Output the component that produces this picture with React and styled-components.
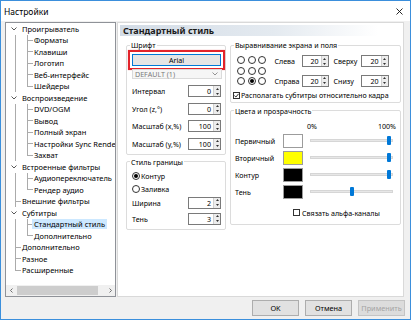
import React from 'react';
import styled, { createGlobalStyle } from 'styled-components';

const GlobalStyle = createGlobalStyle`
  html, body {
    margin: 0;
    padding: 0;
    background: #fff;
  }
  body {
    font-family: 'Noto Sans', 'Open Sans', sans-serif;
    font-size: 7.8px;
    color: #000;
  }
  * {
    box-sizing: border-box;
  }
`;

const line = '#ababab';

const Window = styled.div`
  width: 411px;
  height: 320px;
  border: 1px solid #3b8fdc;
  background: #f0f0f0;
  display: flex;
  flex-direction: column;
  overflow: hidden;
`;

const TitleBar = styled.div`
  height: 20px;
  flex: none;
  background: #fff;
  display: flex;
  align-items: center;
  justify-content: space-between;
  padding: 0 7px 0 3px;
`;

const Title = styled.span`
  font-size: 8.5px;
`;

const Body = styled.div`
  flex: 1;
  display: flex;
  gap: 1px;
  padding: 1px 6px 0 4px;
  min-height: 0;
`;

/* ---------- tree ---------- */

const TreeBox = styled.div`
  width: 111px;
  flex: none;
  border: 1px solid #8f9298;
  background: #fff;
  display: flex;
  flex-direction: column;
  font-size: 7.5px;
`;

const TreeList = styled.div`
  flex: 1;
  overflow: hidden;
  padding-left: 3px;
`;

const TreeRow = styled.div`
  display: flex;
  height: 11.5px;
  line-height: 11.5px;
  white-space: nowrap;
`;

const guideBg = (v, h) => {
  const g = `linear-gradient(${line}, ${line})`;
  const parts = [];
  if (v === 'full') parts.push(`${g} 6px 0 / 1px 100% no-repeat`);
  if (v === 'top') parts.push(`${g} 6px 0 / 1px 50% no-repeat`);
  if (h) parts.push(`${g} 6px 50% / 6px 1px no-repeat`);
  return parts.length ? parts.join(', ') : 'none';
};

const Guide = styled.span`
  width: 12px;
  flex: none;
  display: flex;
  align-items: center;
  padding-left: 2px;
  background: ${p => guideBg(p.$v, p.$h)};
`;

const TreeLabel = styled.span`
  padding: 0 2px;
  margin-left: -1px;
  height: 10px;
  line-height: 10px;
  align-self: center;
  background: ${p => (p.$selected ? '#cce8ff' : 'transparent')};
`;

const HScroll = styled.div`
  height: 11px;
  flex: none;
  display: flex;
  align-items: center;
  background: #f0f0f0;
`;

const ScrollArrow = styled.span`
  width: 10px;
  height: 11px;
  display: flex;
  align-items: center;
  justify-content: center;
`;

const ScrollThumb = styled.span`
  width: 81px;
  height: 9px;
  margin-left: 1px;
  background: #cdcdcd;
`;

const Spacer = styled.span`
  flex: 1;
`;

/* ---------- page ---------- */

const Page = styled.div`
  width: 287px;
  flex: none;
  border: 1px solid #d9d9d9;
  background: #fff;
  display: flex;
  flex-direction: column;
  font-size: 7.1px;
`;

const PageHeader = styled.div`
  margin: 2px 2px 0 2px;
  height: 11px;
  padding-left: 3px;
  line-height: 11px;
  font-size: 9px;
  font-weight: 700;
  color: #1b1b1b;
  background: linear-gradient(90deg, #d3dce6 0%, #e4eaf0 55%, #fff 92%);
`;

const Columns = styled.div`
  display: flex;
  gap: 4px;
  padding: 4px 2px 0 8px;
`;

const Column = styled.div`
  width: ${p => p.$w}px;
  flex: none;
  display: flex;
  flex-direction: column;
  gap: ${p => p.$gap || 0}px;
`;

const Group = styled.fieldset`
  margin: 0;
  min-width: 0;
  border: 1px solid #dcdcdc;
  border-radius: 2px;
  padding: 0 4px ${p => p.$pb || 4}px 5px;
`;

const Legend = styled.legend`
  padding: 0 1px;
  margin-left: -2px;
  line-height: 10px;
`;

const Highlight = styled.div`
  margin: 0 -4px;
  border: 2px solid #e2232a;
  padding: 2px;
  box-shadow: 0 0 1px rgba(226, 35, 42, 0.5);
`;

const FontButton = styled.div`
  height: 12px;
  border: 1px solid #0078d7;
  background: #e5e5e5;
  text-align: center;
  line-height: 10px;
`;

const Combo = styled.div`
  height: 10px;
  margin: -1px -1px 0 0;
  border: 1px solid #dadada;
  background: #f6f6f6;
  color: #7a7a7a;
  display: flex;
  align-items: center;
  justify-content: space-between;
  padding: 0 3px 0 2px;
  line-height: 8px;
`;

const FieldRow = styled.div`
  display: flex;
  align-items: center;
  justify-content: space-between;
  height: 12px;
  margin-top: ${p => p.$mt || 0}px;
`;

const SpinWrap = styled.div`
  width: ${p => p.$w || 33}px;
  height: 12px;
  flex: none;
  display: flex;
  border: 1px solid #7a7a7a;
  background: #fff;
`;

const SpinValue = styled.span`
  flex: 1;
  text-align: right;
  padding-right: 2px;
  line-height: 10px;
`;

const SpinArrows = styled.span`
  width: 7px;
  display: flex;
  flex-direction: column;
  background: #ececec;
  border-left: 1px solid #d0d0d0;
`;

const SpinArrow = styled.span`
  flex: 1;
  display: flex;
  align-items: center;
  justify-content: center;
`;

const OptionRow = styled.label`
  display: flex;
  align-items: center;
  gap: ${p => p.$gap ?? 2}px;
  height: ${p => p.$h || 12}px;
  margin-top: ${p => p.$mt || 0}px;
  margin-left: ${p => p.$ml || 0}px;
  white-space: nowrap;
`;

const RadioDot = styled.span`
  width: 8px;
  height: 8px;
  flex: none;
  border-radius: 50%;
  border: 1px solid #333;
  background: #fff;
  display: flex;
  align-items: center;
  justify-content: center;

  &::after {
    content: '';
    width: 4px;
    height: 4px;
    border-radius: 50%;
    background: ${p => (p.$checked ? '#000' : 'transparent')};
  }
`;

const CheckBox = styled.span`
  width: 7px;
  height: 7px;
  flex: none;
  border: 1px solid #333;
  background: #fff;
  display: flex;
  align-items: center;
  justify-content: center;
`;

const AlignArea = styled.div`
  display: flex;
  align-items: flex-start;
  margin-top: 5px;
`;

const RadioGrid = styled.div`
  display: grid;
  grid-template-columns: repeat(3, 10.5px);
  grid-auto-rows: 10.5px;
  place-items: center;
`;

const MarginGrid = styled.div`
  display: grid;
  grid-template-columns: 27px 27px 32px 28px;
  grid-template-rows: 12px 12px;
  row-gap: 7.5px;
  align-items: center;
  margin-left: 7px;
`;

const MarginLabel = styled.span`
  padding-left: ${p => p.$pl || 0}px;
`;

const ColorGrid = styled.div`
  display: grid;
  grid-template-columns: 47px 20px 90px;
  row-gap: 3px;
  align-items: center;
  margin-top: 5px;
`;

const PercentRow = styled.div`
  grid-column: 3;
  display: flex;
  justify-content: space-between;
  margin: 0 -3px 0 4px;
  height: 10px;
  line-height: 10px;
`;

const ColorLabel = styled.span`
  grid-column: 1;
  margin-left: -1px;
`;

const Swatch = styled.span`
  height: 14px;
  border: 1px solid #9c9c9c;
  background: ${p => p.$color};
`;

const SliderTrack = styled.div`
  position: relative;
  height: 3px;
  margin-left: 7px;
  border: 1px solid #d6d6d6;
  background: #e7e7e7;
`;

const SliderThumb = styled.span`
  position: absolute;
  top: 50%;
  width: 4px;
  height: 9px;
  margin: -4.5px 0 0 -2px;
  background: #0078d7;
  border-radius: 1px;
`;

/* ---------- footer ---------- */

const Footer = styled.div`
  height: 22px;
  flex: none;
  display: flex;
  justify-content: flex-end;
  align-items: flex-start;
  gap: 6px;
  padding: 3px 5px 0 0;
`;

const Button = styled.div`
  width: 47px;
  height: 16px;
  font-size: 7.3px;
  border: 1px solid ${p => (p.$disabled ? '#c4c4c4' : '#adadad')};
  background: ${p => (p.$disabled ? '#dcdcdc' : '#e1e1e1')};
  color: ${p => (p.$disabled ? '#a3a3a3' : '#000')};
  text-align: center;
  line-height: 14px;
`;

/* ---------- small drawings ---------- */

const CloseIcon = () => (
  <svg width="7" height="7" viewBox="0 0 7 7">
    <path d="M0.5 0.5 L6.5 6.5 M6.5 0.5 L0.5 6.5" stroke="#111" strokeWidth="0.9" />
  </svg>
);

const ChevronDown = ({ color = '#555' }) => (
  <svg width="6" height="4" viewBox="0 0 6 4">
    <path d="M0.5 0.5 L3 3 L5.5 0.5" fill="none" stroke={color} strokeWidth="0.9" />
  </svg>
);

const ChevronSide = ({ dir }) => (
  <svg width="3" height="5" viewBox="0 0 3 5">
    <path
      d={dir === 'left' ? 'M2.5 0.5 L0.5 2.5 L2.5 4.5' : 'M0.5 0.5 L2.5 2.5 L0.5 4.5'}
      fill="none"
      stroke="#606060"
      strokeWidth="0.9"
    />
  </svg>
);

const Tri = ({ up }) => (
  <svg width="3" height="2" viewBox="0 0 3 2">
    <path d={up ? 'M0 2 L1.5 0 L3 2 Z' : 'M0 0 L1.5 2 L3 0 Z'} fill="#333" />
  </svg>
);

const Tick = () => (
  <svg width="5" height="5" viewBox="0 0 5 5">
    <path d="M0.4 2.6 L1.9 4 L4.6 0.8" fill="none" stroke="#111" strokeWidth="0.9" />
  </svg>
);

/* ---------- parts ---------- */

const tree = [
  { label: 'Проигрыватель', level: 0, open: true },
  { label: 'Форматы', level: 1 },
  { label: 'Клавиши', level: 1 },
  { label: 'Логотип', level: 1 },
  { label: 'Веб-интерфейс', level: 1 },
  { label: 'Шейдеры', level: 1, last: true },
  { label: 'Воспроизведение', level: 0, open: true },
  { label: 'DVD/OGM', level: 1 },
  { label: 'Вывод', level: 1 },
  { label: 'Полный экран', level: 1 },
  { label: 'Настройки Sync Render', level: 1 },
  { label: 'Захват', level: 1, last: true },
  { label: 'Встроенные фильтры', level: 0, open: true },
  { label: 'Аудиопереключатель', level: 1 },
  { label: 'Рендер аудио', level: 1, last: true },
  { label: 'Внешние фильтры', level: 0 },
  { label: 'Субтитры', level: 0, open: true },
  { label: 'Стандартный стиль', level: 1, selected: true },
  { label: 'Дополнительно', level: 1, last: true },
  { label: 'Дополнительно', level: 0 },
  { label: 'Разное', level: 0 },
  { label: 'Расширенные', level: 0, last: true },
];

function TreeItem({ item }) {
  if (item.level === 0) {
    return (
      <TreeRow>
        {item.open ? (
          <Guide>
            <ChevronDown color="#444" />
          </Guide>
        ) : (
          <Guide $v={item.last ? 'top' : 'full'} $h />
        )}
        <TreeLabel $selected={item.selected}>{item.label}</TreeLabel>
      </TreeRow>
    );
  }
  return (
    <TreeRow>
      <Guide $v="full" />
      <Guide $v={item.last ? 'top' : 'full'} $h />
      <TreeLabel $selected={item.selected}>{item.label}</TreeLabel>
    </TreeRow>
  );
}

function Spin({ value, w }) {
  return (
    <SpinWrap $w={w}>
      <SpinValue>{value}</SpinValue>
      <SpinArrows>
        <SpinArrow>
          <Tri up />
        </SpinArrow>
        <SpinArrow>
          <Tri />
        </SpinArrow>
      </SpinArrows>
    </SpinWrap>
  );
}

function ColorRow({ label, color, alpha }) {
  return (
    <>
      <ColorLabel>{label}</ColorLabel>
      <Swatch $color={color} />
      <SliderTrack>
        <SliderThumb style={{ left: `calc(3px + ${alpha} * (100% - 6px))` }} />
      </SliderTrack>
    </>
  );
}

export default function App() {
  const positions = [false, false, false, false, false, false, false, true, false];

  return (
    <>
      <GlobalStyle />
      <Window>
        <TitleBar>
          <Title>Настройки</Title>
          <CloseIcon />
        </TitleBar>

        <Body>
          <TreeBox>
            <TreeList>
              {tree.map((item, i) => (
                <TreeItem key={i} item={item} />
              ))}
            </TreeList>
            <HScroll>
              <ScrollArrow>
                <ChevronSide dir="left" />
              </ScrollArrow>
              <ScrollThumb />
              <Spacer />
              <ScrollArrow>
                <ChevronSide dir="right" />
              </ScrollArrow>
            </HScroll>
          </TreeBox>

          <Page>
            <PageHeader>Стандартный стиль</PageHeader>
            <Columns>
              <Column $w={100} $gap={2}>
                <Group>
                  <Legend>Шрифт</Legend>
                  <Highlight>
                    <FontButton>Arial</FontButton>
                  </Highlight>
                  <Combo>
                    <span>DEFAULT (1)</span>
                    <ChevronDown color="#888" />
                  </Combo>
                  <FieldRow $mt={6}>
                    <span>Интервал</span>
                    <Spin value="0" />
                  </FieldRow>
                  <FieldRow $mt={5.6}>
                    <span>Угол (z,°)</span>
                    <Spin value="0" />
                  </FieldRow>
                  <FieldRow $mt={5.6}>
                    <span>Масштаб (x,%)</span>
                    <Spin value="100" />
                  </FieldRow>
                  <FieldRow $mt={5.6}>
                    <span>Масштаб (y,%)</span>
                    <Spin value="100" />
                  </FieldRow>
                </Group>

                <Group>
                  <Legend>Стиль границы</Legend>
                  <OptionRow $mt={3} $gap={1}>
                    <RadioDot $checked />
                    Контур
                  </OptionRow>
                  <OptionRow $mt={1} $gap={1}>
                    <RadioDot />
                    Заливка
                  </OptionRow>
                  <FieldRow $mt={2}>
                    <span>Ширина</span>
                    <Spin value="2" />
                  </FieldRow>
                  <FieldRow $mt={4}>
                    <span>Тень</span>
                    <Spin value="3" />
                  </FieldRow>
                </Group>
              </Column>

              <Column $w={171} $gap={3}>
                <Group $pb={2}>
                  <Legend>Выравнивание экрана и поля</Legend>
                  <AlignArea>
                    <RadioGrid>
                      {positions.map((on, i) => (
                        <RadioDot key={i} $checked={on} />
                      ))}
                    </RadioGrid>
                    <MarginGrid>
                      <span>Слева</span>
                      <Spin value="20" w={27} />
                      <MarginLabel $pl={5}>Сверху</MarginLabel>
                      <Spin value="20" w={28} />
                      <span>Справа</span>
                      <Spin value="20" w={27} />
                      <MarginLabel $pl={5}>Снизу</MarginLabel>
                      <Spin value="20" w={28} />
                    </MarginGrid>
                  </AlignArea>
                  <OptionRow $mt={4} $ml={-3} $h={9} $gap={1}>
                    <CheckBox>
                      <Tick />
                    </CheckBox>
                    Располагать субтитры относительно кадра
                  </OptionRow>
                </Group>

                <Group $pb={7}>
                  <Legend>Цвета и прозрачность</Legend>
                  <ColorGrid>
                    <PercentRow>
                      <span>0%</span>
                      <span>100%</span>
                    </PercentRow>
                    <ColorRow label="Первичный" color="#fff" alpha={1} />
                    <ColorRow label="Вторичный" color="#ffff00" alpha={1} />
                    <ColorRow label="Контур" color="#000" alpha={1} />
                    <ColorRow label="Тень" color="#000" alpha={0.5} />
                  </ColorGrid>
                  <OptionRow $mt={9.5} $ml={57} $h={9} $gap={2}>
                    <CheckBox />
                    Связать альфа-каналы
                  </OptionRow>
                </Group>
              </Column>
            </Columns>
          </Page>
        </Body>

        <Footer>
          <Button>OK</Button>
          <Button>Отмена</Button>
          <Button $disabled>Применить</Button>
        </Footer>
      </Window>
    </>
  );
}
